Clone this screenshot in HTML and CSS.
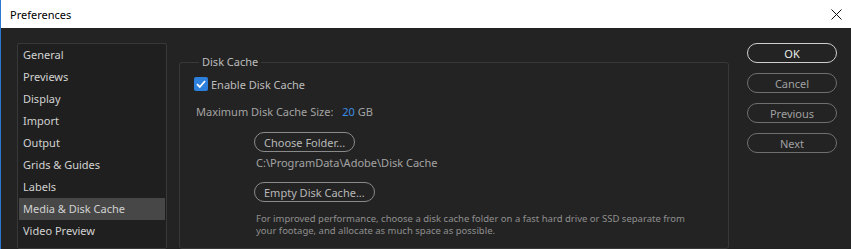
FILE: index.html
```html
<!DOCTYPE html>
<html lang="en">
<head>
    <meta charset="UTF-8">
    <title>Preferences</title>
    <link rel="stylesheet" href="styles.css">
</head>
<body>

    <!-- Title Bar -->
    <header class="titlebar">
        <span class="title">Preferences</span>
        <svg class="close" width="11" height="11" viewBox="0 0 11 11">
            <path d="M0.5 0.5 L10.5 10.5 M10.5 0.5 L0.5 10.5" stroke="#111" stroke-width="1" fill="none"/>
        </svg>
    </header>

    <!-- Dialog Body -->
    <main class="dialog">
        <ul class="nav-list">
            <li>General</li>
            <li>Previews</li>
            <li>Display</li>
            <li>Import</li>
            <li>Output</li>
            <li>Grids &amp; Guides</li>
            <li>Labels</li>
            <li class="active">Media &amp; Disk Cache</li>
            <li>Video Preview</li>
        </ul>

        <fieldset class="group">
            <legend>Disk Cache</legend>

            <label class="check-row">
                <span class="checkbox">
                    <svg width="14" height="14" viewBox="0 0 14 14">
                        <path d="M3 7.2 L5.8 10 L11 4" stroke="#fff" stroke-width="1.8" fill="none"/>
                    </svg>
                </span>
                Enable Disk Cache
            </label>

            <div class="size-row">
                Maximum Disk Cache Size:
                <span class="value">20</span> GB
            </div>

            <div class="folder-block">
                <button class="pill">Choose Folder...</button>
                <div class="path">C:\ProgramData\Adobe\Disk Cache</div>
                <button class="pill">Empty Disk Cache...</button>
                <p class="note">For improved performance, choose a disk cache folder on a fast hard drive or SSD separate from<br>your footage, and allocate as much space as possible.</p>
            </div>
        </fieldset>

        <div class="actions">
            <button class="action primary">OK</button>
            <button class="action">Cancel</button>
            <button class="action">Previous</button>
            <button class="action">Next</button>
        </div>
    </main>

</body>
</html>
```

FILE: styles.css
```css
/* General Reset */
* {
    margin: 0;
    padding: 0;
    box-sizing: border-box;
}

body {
    width: 851px;
    height: 249px;
    overflow: hidden;
    background: #232323;
    border-left: 1px solid #2b78d0;
    font-family: 'Noto Sans', 'Open Sans', sans-serif;
    font-size: 11px;
}

/* Title Bar */
.titlebar {
    height: 28px;
    background: #fff;
    display: flex;
    align-items: center;
    justify-content: space-between;
    padding: 0 9px 0 9px;
    color: #000;
}

.title {
    font-size: 11px;
}

.close {
    display: block;
}

/* Dialog Layout */
.dialog {
    display: grid;
    grid-template-columns: 150px 550px 96px;
    column-gap: 12px;
    padding: 15px 0 0 16px;
}

/* Left Category List */
.nav-list {
    list-style: none;
    border: 1px solid #383838;
    border-radius: 2px;
    background: #1f1f1f;
    padding: 0 1px;
    height: 206px;
}

.nav-list li {
    height: 22px;
    line-height: 22px;
    padding-left: 4px;
    color: #d2d2d2;
}

.nav-list li.active {
    background: #474747;
}

/* Disk Cache Group */
.group {
    margin-top: 11px;
    border: 1px solid #383838;
    border-radius: 3px;
    padding: 6px 14px 0 14px;
    height: 195px;
}

.group legend {
    margin-left: 5px;
    padding: 0 3px;
    color: #bdbdbd;
    line-height: 16px;
}

.check-row {
    display: flex;
    align-items: center;
    gap: 3px;
    height: 16px;
    color: #bdbdbd;
}

.checkbox {
    width: 14px;
    height: 14px;
    background: #2d7fdc;
    border-radius: 2px;
    display: block;
}

.checkbox svg {
    display: block;
}

.size-row {
    margin-top: 12px;
    padding-left: 2px;
    line-height: 16px;
    color: #a3a3a3;
}

.size-row .value {
    color: #3a8ee6;
    margin-left: 6px;
}

.folder-block {
    padding-left: 60px;
    margin-top: 12px;
}

.pill {
    display: block;
    height: 20px;
    padding: 0 9px;
    border: 1px solid #8a8a8a;
    border-radius: 10px;
    background: transparent;
    color: #b8b8b8;
    font-family: inherit;
    font-size: 11px;
}

.path {
    padding-left: 2px;
    line-height: 20px;
    color: #a3a3a3;
    margin-top: 1px;
    margin-bottom: 9px;
}

.note {
    margin-top: 11px;
    padding-left: 2px;
    font-size: 9.5px;
    line-height: 12px;
    white-space: nowrap;
    color: #8f8f8f;
}

/* Right Buttons */
.actions {
    display: flex;
    flex-direction: column;
    gap: 10px;
    padding-left: 6px;
}

.action {
    height: 20px;
    border: 1px solid #6f6f6f;
    border-radius: 10px;
    background: transparent;
    color: #a0a0a0;
    font-family: inherit;
    font-size: 11px;
}

.action.primary {
    border-color: #cfcfcf;
    color: #ececec;
}
```
